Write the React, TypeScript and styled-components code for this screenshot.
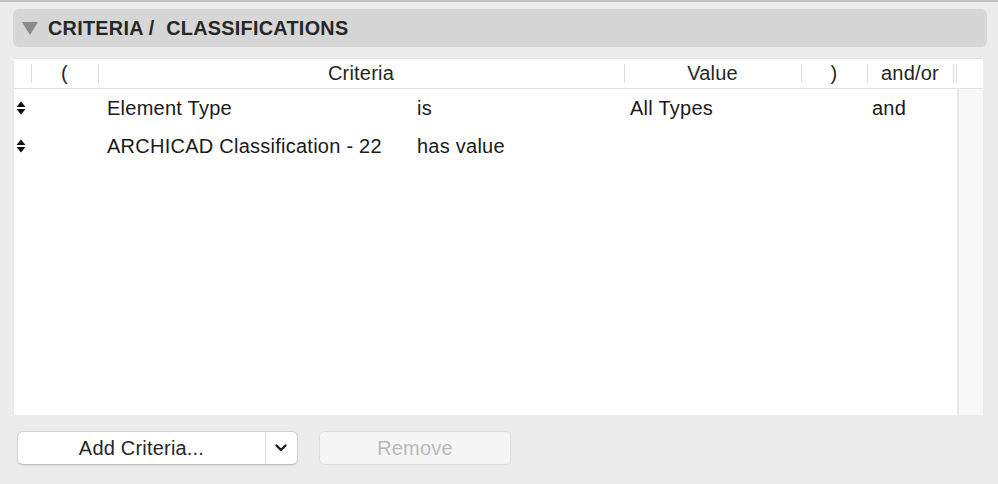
import React from "react"
import styled, { createGlobalStyle } from "styled-components"

const GlobalStyle = createGlobalStyle`
  html, body {
    margin: 0;
    padding: 0;
    background: #ececec;
  }
  body {
    font-family: "Liberation Sans", Arial, sans-serif;
    color: #262626;
  }
`

const Window = styled.div`
  width: 998px;
  height: 484px;
  box-sizing: border-box;
  border-top: 2px solid #c2c2c2;
  background: #ececec;
  display: flex;
  flex-direction: column;
  overflow: hidden;
`

const SectionBar = styled.div`
  margin: 7px 11px 0 13px;
  height: 38px;
  border-radius: 6px;
  background: #d6d6d6;
  display: flex;
  align-items: center;
  padding-left: 9px;
  gap: 10px;
`

const SectionTitle = styled.h2`
  margin: 0;
  font-size: 19.8px;
  font-weight: 700;
  color: #262626;
  letter-spacing: 0.3px;
  white-space: pre;
`

const Table = styled.div`
  margin: 11px 15px 0 14px;
  display: flex;
  flex-direction: column;
`

const HeaderRow = styled.div`
  height: 29px;
  background: #fff;
  border-top: 1px solid #e2e2e2;
  border-bottom: 1px solid #e2e2e2;
  display: flex;
  align-items: center;
  font-size: 20px;
  letter-spacing: 0.2px;
`

const HeadCell = styled.div<{ $w: number; $divider?: boolean }>`
  width: ${(p) => p.$w}px;
  height: 100%;
  position: relative;
  display: flex;
  align-items: center;
  justify-content: center;
  flex-shrink: 0;

  ${(p) =>
    p.$divider &&
    `
    &::before {
      content: "";
      position: absolute;
      left: 0;
      top: 5px;
      bottom: 5px;
      width: 1px;
      background: #dcdcdc;
    }
  `}
`

const Body = styled.div`
  height: 326px;
  display: flex;
  background: #fff;
`

const Rows = styled.div`
  width: 943px;
  display: flex;
  flex-direction: column;
`

const Row = styled.div`
  height: 38px;
  display: flex;
  align-items: center;
  font-size: 20px;
  letter-spacing: 0.25px;
  color: #1a1a1a;
`

const Cell = styled.div<{ $w: number; $pad?: number }>`
  width: ${(p) => p.$w}px;
  padding-left: ${(p) => p.$pad ?? 0}px;
  box-sizing: border-box;
  flex-shrink: 0;
  white-space: nowrap;
  display: flex;
  align-items: center;
`

const ScrollTrack = styled.div`
  width: 24px;
  border-left: 2px solid #e6e6e6;
  background: #f8f8f8;
`

const Footer = styled.div`
  margin: 16px 0 0 17px;
  display: flex;
  gap: 21px;
`

const SplitButton = styled.div`
  width: 281px;
  height: 34px;
  box-sizing: border-box;
  background: #fff;
  border: 1px solid #d4d4d4;
  border-bottom-color: #c2c2c2;
  border-radius: 6px;
  box-shadow: 0 0.5px 1px rgba(0, 0, 0, 0.08);
  display: flex;
  align-items: stretch;
`

const SplitMain = styled.div`
  flex: 1;
  display: flex;
  align-items: center;
  justify-content: center;
  font-size: 20px;
  letter-spacing: 0.2px;
  color: #262626;
  border-right: 1px solid #e2e2e2;
`

const SplitArrow = styled.div`
  width: 30px;
  display: flex;
  align-items: center;
  justify-content: center;
  padding-right: 1px;
`

const PlainButton = styled.div<{ $disabled?: boolean }>`
  width: 192px;
  height: 34px;
  box-sizing: border-box;
  border-radius: 6px;
  border: 1px solid ${(p) => (p.$disabled ? "#e0e0e0" : "#d4d4d4")};
  background: ${(p) => (p.$disabled ? "#f5f5f5" : "#fff")};
  color: ${(p) => (p.$disabled ? "#b9b9b9" : "#262626")};
  font-size: 20px;
  letter-spacing: 0.2px;
  display: flex;
  align-items: center;
  justify-content: center;
`

const Disclosure = () => (
  <svg width="16" height="13" viewBox="0 0 16 13">
    <polygon points="0,0 16,0 8,13" fill="#8a8a8a" />
  </svg>
)

const SortArrows = () => (
  <svg width="10" height="14" viewBox="0 0 10 14">
    <polygon points="0.5,6 5,0.5 9.5,6" fill="#111" />
    <polygon points="0.5,8 5,13.5 9.5,8" fill="#111" />
  </svg>
)

const Chevron = () => (
  <svg width="12" height="8" viewBox="0 0 12 8">
    <polyline
      points="1.5,1.5 6,6 10.5,1.5"
      fill="none"
      stroke="#1e1e1e"
      strokeWidth="2.4"
      strokeLinecap="round"
      strokeLinejoin="round"
    />
  </svg>
)

const columns = [
  { label: "", w: 17 },
  { label: "(", w: 67, divider: true },
  { label: "Criteria", w: 526, divider: true },
  { label: "Value", w: 177, divider: true },
  { label: ")", w: 66, divider: true },
  { label: "and/or", w: 86, divider: true },
  { label: "", w: 3, divider: true },
  { label: "", w: 27, divider: true },
]

const rows = [
  { criteria: "Element Type", op: "is", value: "All Types", conj: "and" },
  { criteria: "ARCHICAD Classification - 22", op: "has value", value: "", conj: "" },
]

export default function App() {
  return (
    <Window>
      <GlobalStyle />
      <SectionBar>
        <Disclosure />
        <SectionTitle>CRITERIA /  CLASSIFICATIONS</SectionTitle>
      </SectionBar>
      <Table>
        <HeaderRow>
          {columns.map((c, i) => (
            <HeadCell key={i} $w={c.w} $divider={c.divider}>
              {c.label}
            </HeadCell>
          ))}
        </HeaderRow>
        <Body>
          <Rows>
            {rows.map((r, i) => (
              <Row key={i}>
                <Cell $w={84} $pad={2}>
                  <SortArrows />
                </Cell>
                <Cell $w={312} $pad={9}>{r.criteria}</Cell>
                <Cell $w={214} $pad={7}>{r.op}</Cell>
                <Cell $w={177} $pad={6}>{r.value}</Cell>
                <Cell $w={66} />
                <Cell $w={86} $pad={5}>{r.conj}</Cell>
              </Row>
            ))}
          </Rows>
          <ScrollTrack />
        </Body>
      </Table>
      <Footer>
        <SplitButton>
          <SplitMain>Add Criteria...</SplitMain>
          <SplitArrow>
            <Chevron />
          </SplitArrow>
        </SplitButton>
        <PlainButton $disabled>Remove</PlainButton>
      </Footer>
    </Window>
  )
}
